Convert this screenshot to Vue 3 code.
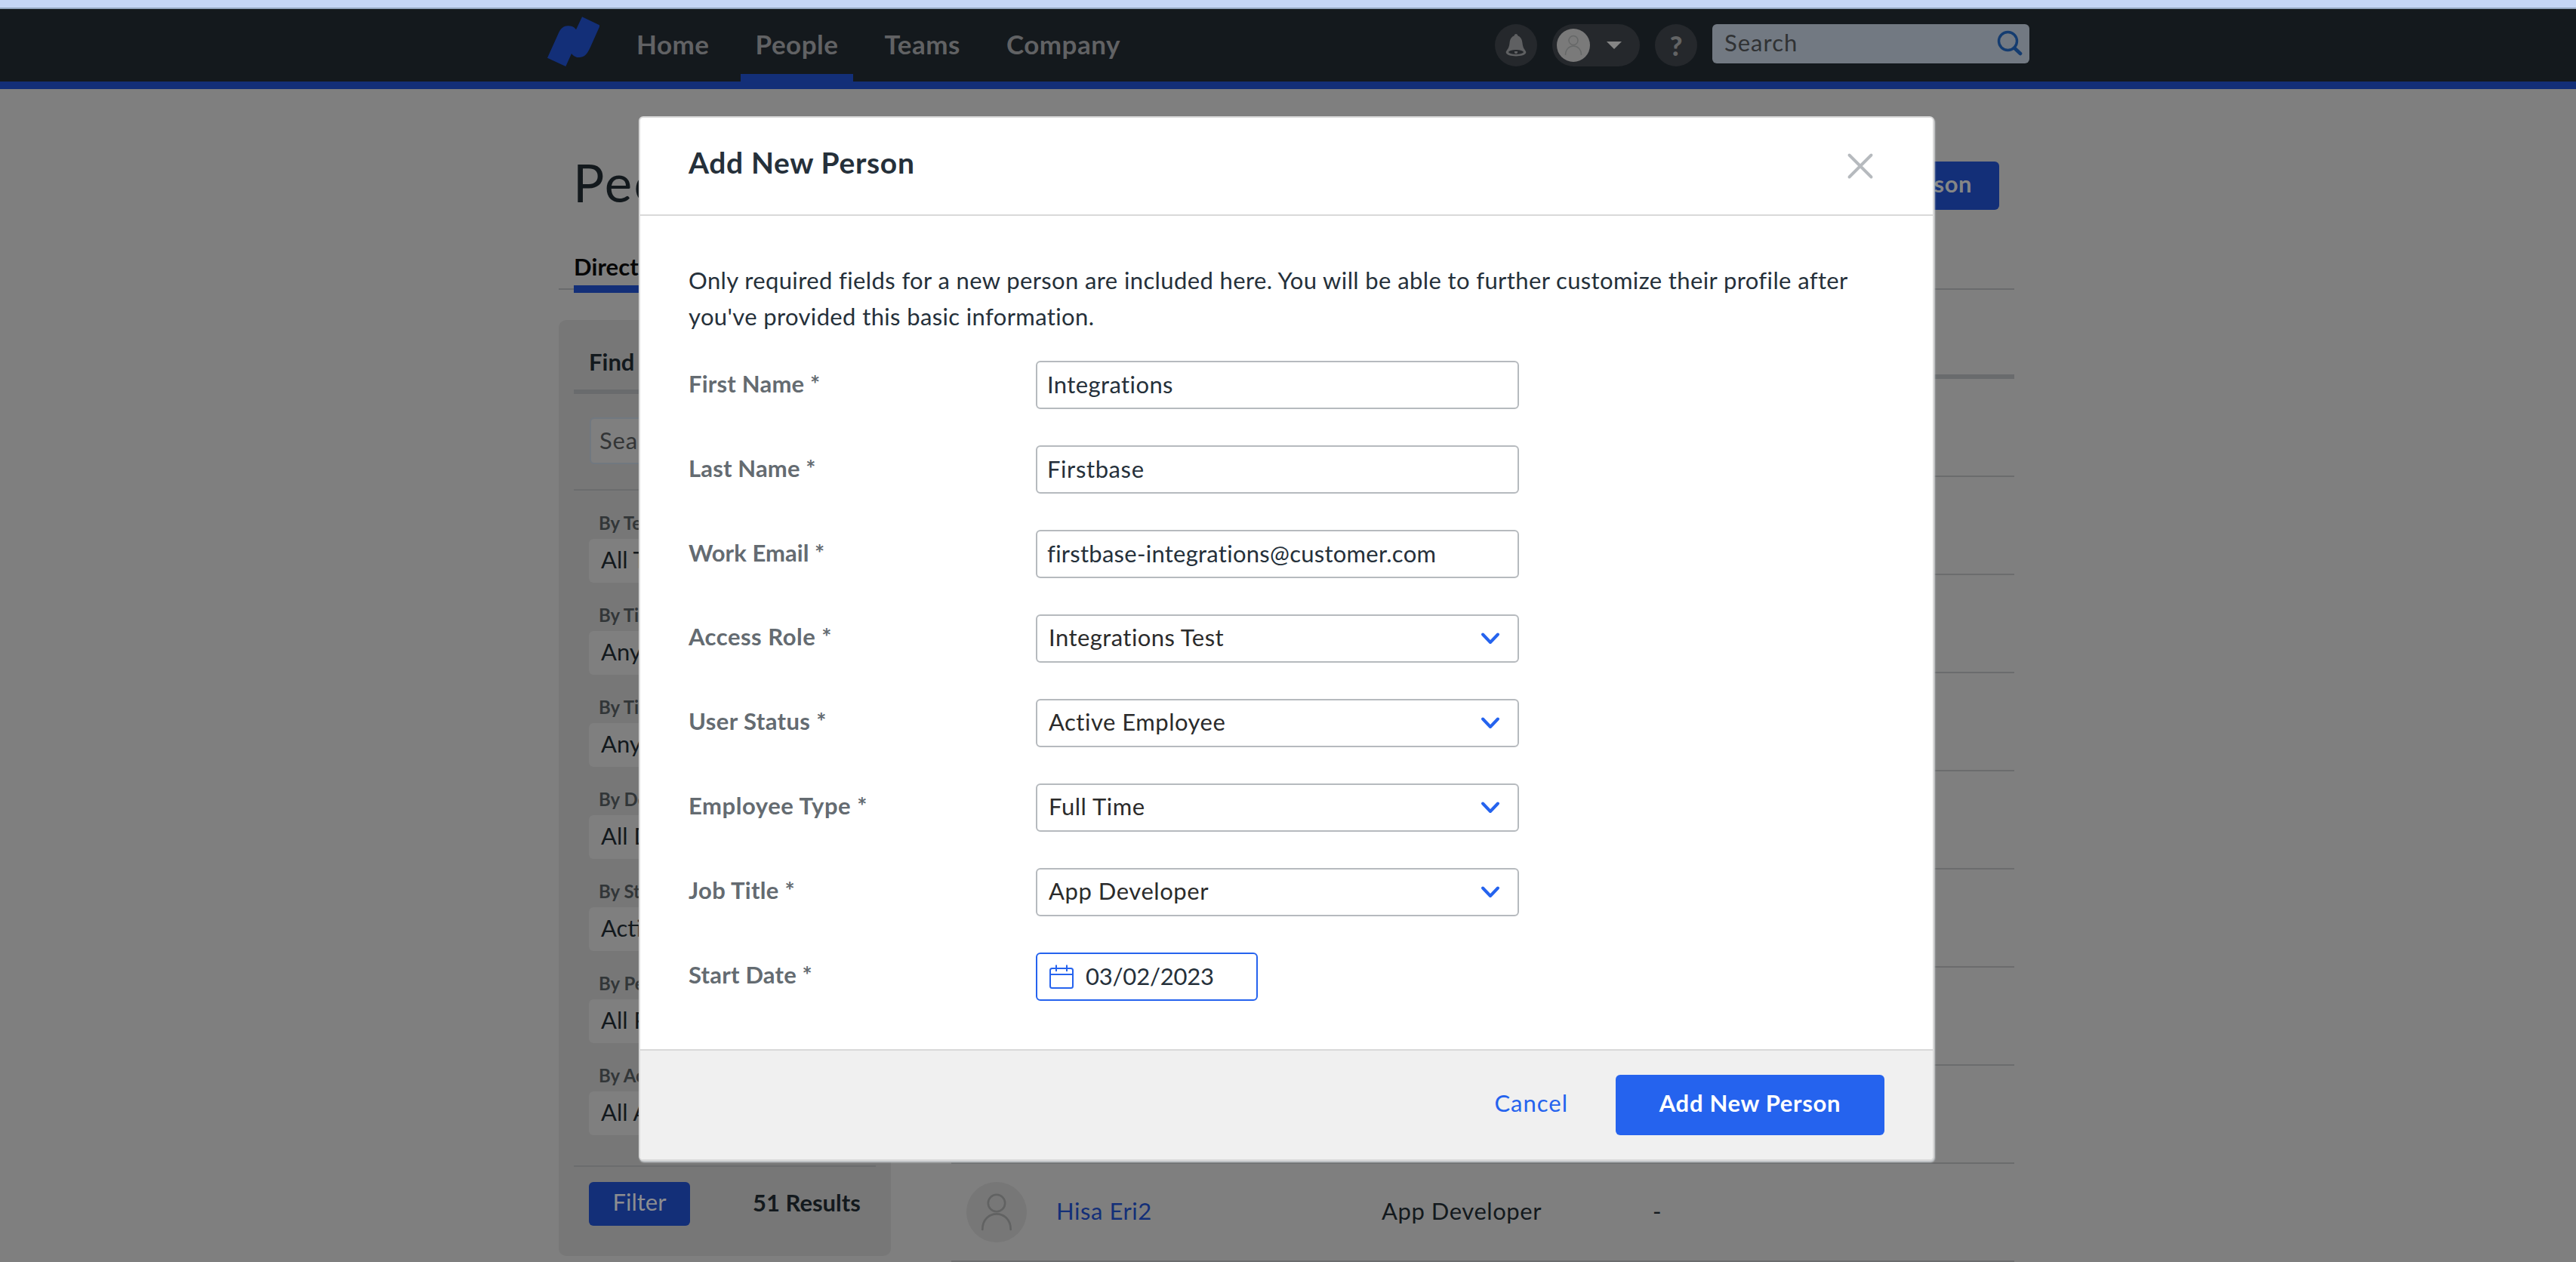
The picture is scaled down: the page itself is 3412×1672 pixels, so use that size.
<script setup>
const nav = [
  { label: 'Home' },
  { label: 'People', active: true },
  { label: 'Teams' },
  { label: 'Company' },
]

const filters = [
  { label: 'By Team', value: 'All Teams' },
  { label: 'By Title', value: 'Any' },
  { label: 'By Title', value: 'Any' },
  { label: 'By Department', value: 'All Departments' },
  { label: 'By Status', value: 'Active' },
  { label: 'By Permission', value: 'All Permissions' },
  { label: 'By Access', value: 'All Access' },
]

// "track" and "labelTrack" are letter-spacing values in pixels
const fields = [
  { label: 'First Name *', labelTrack: 0.2, type: 'text', value: 'Integrations', track: 0.4 },
  { label: 'Last Name *', labelTrack: 0.15, type: 'text', value: 'Firstbase', track: 0.6 },
  { label: 'Work Email *', labelTrack: 0.05, type: 'text', value: 'firstbase-integrations@customer.com', track: 0.26 },
  { label: 'Access Role *', labelTrack: 0.5, type: 'select', value: 'Integrations Test', track: 0.44 },
  { label: 'User Status *', labelTrack: 0.4, type: 'select', value: 'Active Employee', track: 0.5 },
  { label: 'Employee Type *', labelTrack: 0.55, type: 'select', value: 'Full Time', track: 0.55 },
  { label: 'Job Title *', labelTrack: 0.3, type: 'select', value: 'App Developer', track: 0.55 },
  { label: 'Start Date *', labelTrack: 0.2, type: 'date', value: '03/02/2023', track: -0.2 },
]

const coveredRows = 8
</script>

<template>
  <div class="app">
    <div class="strip"></div>
    <header class="navbar">
      <svg class="logo" viewBox="0 0 70 66" width="70" height="66">
        <path d="M47 0.300 L70 11.300 V13.500 L57.500 41.500 C53.500 50.500 49 54 43.300 54 C38.500 54 35.500 52.500 33 49 L25.300 66 L1 54.700 L16 21.500 C19 15 23 12.300 27.700 12.300 C33 12.300 36.500 13.500 39 17.300 Z" fill="#132f78" />
      </svg>
      <nav class="links">
        <a v-for="n in nav" :key="n.label" class="link" :class="{ active: n.active }">{{ n.label }}</a>
      </nav>
      <div class="tools">
        <span class="round">
          <svg viewBox="0 0 28 30" width="28" height="30">
            <path d="M14 0 C15.500 0 16.300 1.200 16.300 2.300 C20.500 4 22 7.500 22.500 12 C23 18 25 20 27 23 C29 27.500 21 29.500 14 29.500 C7 29.500 -1 27.500 1 23 C3 20 5 18 5.500 12 C6 7.500 7.500 4 11.700 2.300 C11.700 1.200 12.500 0 14 0 Z" fill="#5f6062" />
            <ellipse cx="14" cy="24" rx="10" ry="2.900" fill="#25282c" />
            <path d="M12 23 h4 v1.200 a2 2 0 0 1 -4 0 Z" fill="#5f6062" />
          </svg>
        </span>
        <span class="account">
          <svg viewBox="0 0 44 44" width="44" height="44">
            <circle cx="22" cy="22" r="22" fill="#7a7a7a" />
            <g fill="none" stroke="#666868" stroke-width="1.500">
              <circle cx="22" cy="15.500" r="6" />
              <path d="M11.500 35 C11.500 19 32.500 19 32.500 35" />
            </g>
          </svg>
          <svg viewBox="0 0 20 10" width="20" height="10"><path d="M0 0 H20 L10 10 Z" fill="#858585" /></svg>
        </span>
        <span class="round help">?</span>
        <span class="search">
          <span>Search</span>
          <svg viewBox="0 0 34 34" width="34" height="34" fill="none" stroke="#143c70">
            <circle cx="14.500" cy="14.500" r="12" stroke-width="3.400" />
            <path d="M23 23.500 L31 31" stroke-width="4.600" stroke-linecap="round" />
          </svg>
        </span>
      </div>
    </header>

    <main class="content">
      <div class="title-row">
        <h1>People</h1>
        <span class="add">Add New Person</span>
      </div>
      <div class="tabs"><span class="tab">Directory</span></div>
      <div class="columns">
        <aside class="sidebar">
          <div class="side-title">Find People</div>
          <div class="side-search">Search</div>
          <div class="filters">
            <div v-for="(f, i) in filters" :key="i" class="filter">
              <div class="filter-label">{{ f.label }}</div>
              <div class="filter-box">{{ f.value }}</div>
            </div>
          </div>
          <div class="side-foot">
            <span class="filter-btn">Filter</span>
            <span class="results">51 Results</span>
          </div>
        </aside>
        <section class="table">
          <div class="thead"></div>
          <div v-for="r in coveredRows" :key="r" class="row"></div>
          <div class="row">
            <svg class="avatar" viewBox="0 0 80 80" width="80" height="80">
              <circle cx="40" cy="40" r="40" fill="#777" />
              <g fill="none" stroke="#616262" stroke-width="2.600" stroke-linecap="round">
                <circle cx="40" cy="28" r="11.200" />
                <path d="M21.300 63 C21.300 35.500 58.700 35.500 58.700 63" />
              </g>
            </svg>
            <span class="name">Hisa Eri2</span>
            <span class="job">App Developer</span>
            <span class="dash">-</span>
          </div>
        </section>
      </div>
    </main>

    <div class="modal">
      <div class="modal-head">
        <h2>Add New Person</h2>
        <svg viewBox="0 0 36 36" width="36" height="36" stroke="#b6babe" stroke-width="3.900" stroke-linecap="round">
          <path d="M3.500 3.500 L32.500 32.500 M32.500 3.500 L3.500 32.500" />
        </svg>
      </div>
      <div class="modal-body">
        <p>
          <span class="l1">Only required fields for a new person are included here. You will be able to further customize their profile after</span><br />
          <span class="l2">you've provided this basic information.</span>
        </p>
        <div v-for="f in fields" :key="f.label" class="field" :class="f.type">
          <label :style="{ letterSpacing: f.labelTrack + 'px' }">{{ f.label }}</label>
          <div class="control">
            <svg v-if="f.type === 'date'" class="cal" viewBox="0 0 34 34" width="34" height="34" fill="none" stroke="#2563ee" stroke-width="2">
              <rect x="2" y="6" width="30" height="26" rx="2.500" />
              <path d="M2 14 H32 M10 1.500 V10 M24 1.500 V10" />
            </svg>
            <span class="value" :style="{ letterSpacing: f.track + 'px' }">{{ f.value }}</span>
            <svg v-if="f.type === 'select'" class="chev" viewBox="0 0 28 18" width="28" height="18" fill="none" stroke="#2563ee" stroke-width="4" stroke-linecap="round" stroke-linejoin="round">
              <path d="M4 3.500 L14 14 L24 3.500" />
            </svg>
          </div>
        </div>
      </div>
      <div class="modal-foot">
        <span class="cancel">Cancel</span>
        <span class="primary">Add New Person</span>
      </div>
    </div>
  </div>
</template>

<style>
body {
  background: #7f7f7f;
}
</style>

<style scoped>
.app {
  position: relative;
  width: 3412px;
  height: 1672px;
  overflow: hidden;
  background: #7f7f7f;
  color: #13191d;
  font-family: Lato, 'Liberation Sans', sans-serif;
  font-size: 31px;
}
.app,
.app * {
  box-sizing: border-box;
}
.app svg {
  display: block;
  flex: none;
}
h1,
h2,
p {
  margin: 0;
}
.strip {
  height: 12px;
  background: #c5d6f5;
  border-bottom: 2px solid #92a5bd;
}
.navbar {
  display: flex;
  height: 106px;
  padding: 0 724px;
  background: #14191d;
  border-bottom: 10px solid #132f78;
}
.logo {
  margin-top: 10px;
}
.links {
  display: flex;
  margin-left: 29px;
}
.link {
  height: 96px;
  padding: 0 20px;
  margin-right: 21px;
  color: #616264;
  font-size: 35px;
  font-weight: 700;
  letter-spacing: 0.500px;
  line-height: 92px;
}
.link.active {
  border-bottom: 10px solid #132f78;
}
.tools {
  display: flex;
  align-items: flex-start;
  padding-top: 20px;
  margin-left: auto;
}
.round {
  display: flex;
  align-items: center;
  justify-content: center;
  width: 56px;
  height: 56px;
  border-radius: 50%;
  background: #25282c;
}
.help {
  color: #636465;
  font-size: 36px;
  font-weight: 900;
}
.account {
  display: flex;
  align-items: center;
  width: 116px;
  height: 56px;
  margin: 0 20px;
  padding-left: 6px;
  gap: 22px;
  border-radius: 28px;
  background: #25282c;
}
.search {
  display: flex;
  justify-content: space-between;
  width: 420px;
  height: 52px;
  margin-left: 20px;
  padding: 8px 9px 0 16px;
  border-radius: 6px;
  background: #727982;
  color: #303234;
  line-height: 32px;
  letter-spacing: 1px;
}
.content {
  width: 1928px;
  margin: 84px 0 0 740px;
}
.title-row {
  display: flex;
  justify-content: space-between;
  height: 80px;
  padding: 0 20px 0 19px;
}
h1 {
  font-size: 69px;
  font-weight: 400;
  line-height: 80px;
  letter-spacing: 2.200px;
}
.add {
  height: 64px;
  margin-top: 12px;
  padding: 0 36px;
  border-radius: 6px;
  background: #132f78;
  color: #858686;
  font-weight: 700;
  line-height: 59px;
  letter-spacing: 0.500px;
}
.tabs {
  display: flex;
  align-items: flex-start;
  height: 51px;
  margin-top: 51px;
  padding-left: 20px;
  border-bottom: 2px solid #6a6b6d;
}
.tab {
  height: 55px;
  margin-bottom: -6px;
  border-bottom: 10px solid #132f78;
  color: #060606;
  font-weight: 700;
  line-height: 41px;
  letter-spacing: 0.100px;
}
.columns {
  display: flex;
  gap: 80px;
  margin-top: 40px;
}
.sidebar {
  width: 440px;
  height: 1240px;
  padding: 0 20px;
  border-radius: 10px;
  background: #777;
}
.side-title {
  height: 98px;
  padding: 35px 20px 0;
  border-bottom: 6px solid #696b6d;
  font-weight: 700;
  line-height: 41px;
}
.side-search {
  height: 62px;
  margin: 31px 20px 0 21px;
  padding-left: 11px;
  border: 2px solid #717880;
  border-radius: 6px;
  background: #7f7f7f;
  color: #333536;
  line-height: 57px;
  letter-spacing: 0.800px;
}
.filters {
  height: 898px;
  margin-top: 33px;
  border-top: 2px solid #6b6c6d;
  border-bottom: 2px solid #6b6c6d;
}
.filter {
  padding: 27px 20px 0;
}
.filter-label {
  height: 37px;
  padding-left: 13px;
  color: #323638;
  font-size: 24px;
  font-weight: 700;
  line-height: 31px;
}
.filter-box {
  height: 58px;
  padding-left: 16px;
  border-radius: 6px;
  background: #7f7f7f;
  line-height: 54px;
}
.side-foot {
  display: flex;
  padding: 20px 20px 0;
}
.filter-btn {
  width: 134px;
  height: 58px;
  border-radius: 6px;
  background: #132f78;
  color: #8c8d90;
  line-height: 53px;
  text-align: center;
}
.results {
  margin-left: 83px;
  font-weight: 700;
  line-height: 55px;
}
.table {
  width: 1408px;
}
.thead {
  height: 78px;
  border-bottom: 6px solid #696b6d;
}
.row {
  display: flex;
  align-items: center;
  height: 130px;
  border-bottom: 2px solid #6b6c6d;
  letter-spacing: 0.550px;
}
.avatar {
  margin-left: 20px;
}
.row span {
  padding-bottom: 5px;
}
.name {
  width: 431px;
  margin-left: 39px;
  color: #132f78;
}
.job {
  width: 359px;
}

.modal {
  position: absolute;
  left: 846px;
  top: 154px;
  display: flex;
  flex-direction: column;
  width: 1716px;
  height: 1384px;
  border: 2px solid #d9d9d9;
  border-radius: 6px;
  background: #fff;
  box-shadow: 1px 2px 2px #c9cdd0;
  overflow: hidden;
  color: #25303a;
}
.modal-head {
  display: flex;
  align-items: center;
  justify-content: space-between;
  height: 130px;
  padding: 0 78px 0 64px;
  border-bottom: 2px solid #d9d9d9;
}
h2 {
  padding-bottom: 11px;
  font-size: 39px;
  font-weight: 700;
  letter-spacing: 0.650px;
}
.modal-body {
  flex: 1;
  padding: 61px 0 0 64px;
}
p {
  margin-bottom: 35px;
  line-height: 48px;
  white-space: nowrap;
}
.l1 {
  letter-spacing: 0.380px;
}
.l2 {
  letter-spacing: 0.370px;
}
.field {
  display: flex;
  height: 64px;
  margin-bottom: 48px;
}
.field label {
  width: 460px;
  color: #646b71;
  font-weight: 700;
  line-height: 61px;
}
.field.select label,
.field.date label {
  line-height: 59px;
}
.control {
  display: flex;
  align-items: center;
  width: 640px;
  border: 2px solid #b6babe;
  border-radius: 6px;
  padding: 0 22px 0 13px;
}
.value {
  padding-bottom: 3px;
}
.select .control {
  justify-content: space-between;
  padding-left: 15px;
  color: #2b2b2b;
}
.select .value {
  padding-bottom: 5px;
}
.date .control {
  width: 294px;
  gap: 15px;
  padding-left: 15px;
  border-color: #2563ee;
}
.modal-foot {
  display: flex;
  align-items: flex-start;
  justify-content: flex-end;
  height: 146px;
  padding: 32px 64px 0 0;
  border-top: 2px solid #d9d9d9;
  background: #f0f0f0;
}
.cancel {
  margin-right: 63px;
  color: #2563ee;
  line-height: 75px;
  letter-spacing: 1px;
}
.primary {
  width: 356px;
  height: 80px;
  border-radius: 6px;
  background: #2563ee;
  color: #fff;
  font-weight: 700;
  line-height: 75px;
  text-align: center;
  letter-spacing: 0.690px;
}
</style>
